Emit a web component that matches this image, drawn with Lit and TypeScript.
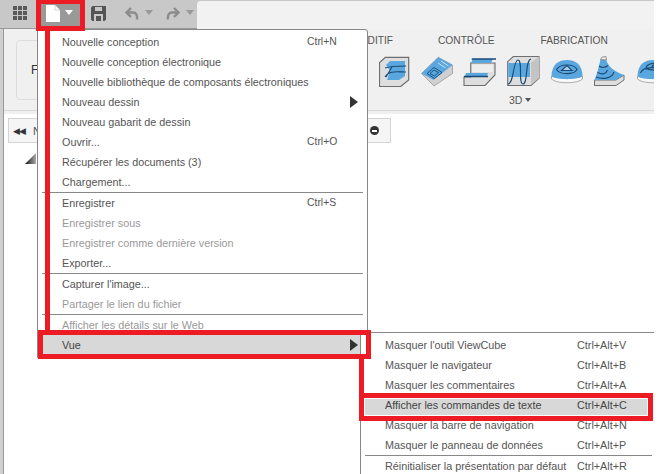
import { LitElement, html, css, svg } from "lit";
import { customElement } from "lit/decorators.js";

type Row = { t?: string; k?: string; dis?: boolean; arrow?: boolean; hot?: boolean; sep?: boolean };

const MAIN: Row[] = [
  { t: "Nouvelle conception", k: "Ctrl+N" },
  { t: "Nouvelle conception électronique" },
  { t: "Nouvelle bibliothèque de composants électroniques" },
  { t: "Nouveau dessin", arrow: true },
  { t: "Nouveau gabarit de dessin" },
  { t: "Ouvrir...", k: "Ctrl+O" },
  { t: "Récupérer les documents (3)" },
  { t: "Chargement..." },
  { sep: true },
  { t: "Enregistrer", k: "Ctrl+S" },
  { t: "Enregistrer sous", dis: true },
  { t: "Enregistrer comme dernière version", dis: true },
  { t: "Exporter..." },
  { sep: true },
  { t: "Capturer l'image..." },
  { t: "Partager le lien du fichier", dis: true },
  { sep: true },
  { t: "Afficher les détails sur le Web", dis: true },
  { t: "Vue", arrow: true, hot: true },
];
const SUB: Row[] = [
  { t: "Masquer l'outil ViewCube", k: "Ctrl+Alt+V" },
  { t: "Masquer le navigateur", k: "Ctrl+Alt+B" },
  { t: "Masquer les commentaires", k: "Ctrl+Alt+A" },
  { t: "Afficher les commandes de texte", k: "Ctrl+Alt+C", hot: true },
  { t: "Masquer la barre de navigation", k: "Ctrl+Alt+N" },
  { t: "Masquer le panneau de données", k: "Ctrl+Alt+P" },
  { sep: true },
  { t: "Réinitialiser la présentation par défaut", k: "Ctrl+Alt+R" },
];

const B = "#5aa7e0", D = "#1a4a73", G = "#dedede", O = "#6e6e6e";
/* Each icon sits in a slot; slot width sets the rhythm of the row. */
const ICONS = [
  svg`<svg class="ic" width="42" height="31" viewBox="0 0 42 31"><path d="M.5 6.700 6.300 1.300H29.700V24L21.700 30.500H.5Z" fill="${G}" stroke="${O}" stroke-width="1.200"/><path d="M7 9 11 5H26V20L20 24H8L11 15Z" fill="${B}"/><path d="M6 12C12 10 20 10 27 10M6 21C10 14 18 16 27 16M7 21 13 11" stroke="${D}" stroke-width="1.100" fill="none"/></svg>`,
  svg`<svg class="ic" width="42" height="31" viewBox="0 0 42 31"><path d="M.5 17.500 17.300 1.300 31.500 9V17.500L13 30Z" fill="#d0d0d0" stroke="#999" stroke-width=".8"/><path d="M.5 17.500 17.300 1.300 31.500 9 12.500 24Z" fill="${B}"/><path d="M6 17.500 13 11.500 21 16.500 13.500 22.500ZM9 17.500 13 14 17.500 16.500 13.500 20Z" stroke="${D}" fill="none" stroke-width=".9"/><path d="M17 7 24.500 12M20 5 27.500 10" stroke="#cfe5f6" stroke-width="1"/></svg>`,
  svg`<svg class="ic" width="44" height="31" viewBox="0 0 44 31"><path d="M7.700 7H32V19L22 29.500H1V21H7.700Z" fill="${G}" stroke="${O}" stroke-width="1.100"/><path d="M9.700 3H30L28 7H8Z" fill="${B}"/><path d="M3 17H25L24 20H2Z" fill="${B}"/><path d="M8.700 3H33M1 20.500H25" stroke="${D}" stroke-width="1.300"/><path d="M9 8.500H30V16H9Z" fill="#eee"/></svg>`,
  svg`<svg class="ic" width="44" height="31" viewBox="0 0 44 31"><path d="M.7 5.700 6.300 .5H32V22.300L24 29.500H.7Z" fill="${G}" stroke="${O}" stroke-width="1.100"/><path d="M1.300 7H23V21H1.300Z" fill="${B}"/><path d="M24 6.500 32 .5V22L24 29Z" fill="#c4c4c4"/><path d="M1 28C7 28 6 4 11 4S11 28 16 28 18 4 24 3" fill="none" stroke="${D}" stroke-width="1.100"/></svg>`,
  svg`<svg class="ic" width="43" height="31" viewBox="0 0 43 31"><path d="M.5 20V23C5 28 27 28 31.500 23V20Z" fill="#f8f8f8" stroke="#999" stroke-width=".8"/><path d="M.5 20.500C.5 8 8 4 16 4S31.500 8 31.500 20.500C26 24 6 24 .5 20.500Z" fill="${B}"/><path d="M5.500 13.500C9 7.500 23 7.500 26 13.500 23 19 9 19 5.500 13.500Z" fill="none" stroke="${D}" stroke-width="1.100"/><path d="M10.500 14.500 16 9.500 21 14.500Z" fill="#a9d2f0" stroke="${D}" stroke-width="1.100"/></svg>`,
  svg`<svg class="ic" width="43" height="31" viewBox="0 0 43 31"><path d="M.5 24H22L30 19V24L22 29.500H.5Z" fill="${G}" stroke="${O}"/><path d="M.5 24C3 18 5 10 6.500 3.500H12C14 10 19 15 30 19L22 24Z" fill="${B}"/><path d="M6.500 3.500 8 1 12 .5 12.500 4Z" fill="#eaeaea" stroke="#777" stroke-width=".7"/><path d="M3.500 16.500C9 19 12 18 13.500 14M2 21C10 24 18 22 20 16M5 10C8 12 11 12 14 9.500" fill="none" stroke="${D}" stroke-width="1.100"/></svg>`,
  svg`<svg class="ic" width="32" height="31" viewBox="0 0 32 31"><path d="M.5 20V23C5 28 27 28 31.500 23V20Z" fill="#f8f8f8" stroke="#999" stroke-width=".8"/><path d="M.5 20.500C.5 8 8 4 16 4S31.500 8 31.500 20.500C26 24 6 24 .5 20.500Z" fill="${B}"/><path d="M3.500 17C6 10 24 10 27 16M9 12C10 6 24 6 27 11 24 15 13 15 9 12ZM15 10.500C16 8 23 8 24 10.500 22 12.500 17 12.500 15 10.500Z" fill="none" stroke="${D}" stroke-width="1.100"/></svg>`,
];

@customElement("app-root")
export class AppRoot extends LitElement {
  static styles = css`
    :host {
      display: block;
      width: 660px;
      height: 474px;
      position: relative;
      overflow: hidden;
      background: #fff;
      font-family: "Liberation Sans", Arial, sans-serif;
      font-size: 11px;
      color: #555;
    }
    .app { width: 654px; height: 474px; display: flex; flex-direction: column; overflow: hidden; background: #fff; }
    .top { height: 29px; flex: none; box-sizing: border-box; background: #c8c8c8; border-bottom: 1px solid #999; display: flex; align-items: flex-start; position: relative; }
    .grid { margin: 6px 0 0 13px; width: 15px; height: 15px; display: grid; grid-template-columns: repeat(3, 4px); grid-auto-rows: 4px; gap: 1px; }
    .grid i { background: #5a5a5a; }
    .file { margin: 4px 0 0 13px; width: 39px; height: 22px; background: #999; display: flex; gap: 5px; padding: 1px 0 0 5px; box-sizing: border-box; }
    .save { margin: 6px 0 0 11px; }
    .undo { margin: 7px 0 0 19px; }
    .redo { margin: 7px 0 0 13px; }
    .car { width: 0; height: 0; border-left: 4px solid transparent; border-right: 4px solid transparent; border-top: 5px solid #999; margin: 10px 0 0 6px; }
    .file .car { border-top-color: #fff; margin: 5px 0 0; }
    .tab { position: absolute; left: 197px; right: 0; top: 1px; bottom: -1px; background: #f2f2f2; border-radius: 4px 0 0 0; }
    .body { flex: 1; display: flex; min-height: 0; }
    .strip { width: 3px; background: #cfcfcf; border-right: 1px solid #999; flex: none; }
    .main { flex: 1; display: flex; flex-direction: column; min-width: 0; }
    .ribbon { height: 81px; flex: none; background: #f0f0f0; border-bottom: 1px solid #d8d8d8; display: flex; }
    .foot { height: 3px; flex: none; background: #f0f0f0; }
    .card { margin: 11px 0 0 12px; width: 80px; height: 60px; border: 1px solid #dcdcdc; border-radius: 4px; box-sizing: border-box; display: flex; align-items: center; padding-left: 14px; color: #333; font-size: 12px; }
    .groups { margin-left: 264px; flex: 1; display: flex; flex-direction: column; min-width: 0; }
    .labels { display: flex; margin-top: 5px; height: 14px; line-height: 14px; font-size: 10.2px; color: #555; white-space: nowrap; }
    .labels .add { width: 33px; display: flex; justify-content: flex-end; flex: none; }
    .labels .ctl { margin-left: 45px; flex: none; }
    .labels .fab { margin-left: 46px; flex: none; }
    .icons { display: flex; margin: 8px 0 0 19px; height: 31px; }
    .ic { flex: none; display: block; }
    .sub3d { margin: 6px 0 0 149px; display: flex; align-items: center; gap: 3px; font-size: 10.5px; line-height: 14px; }
    .sub3d i { width: 0; height: 0; border-left: 3px solid transparent; border-right: 3px solid transparent; border-top: 4px solid #555; }
    .canvas { flex: 1; padding: 4px 0 0 4px; }
    .panel { width: 383px; height: 25px; box-sizing: border-box; border: 1px solid #d4d4d4; background: #f5f5f5; display: flex; align-items: center; padding: 0 11px 0 4px; }
    .panel .rw { letter-spacing: -1px; color: #333; font-size: 9px; width: 20px; }
    .panel .nm { color: #555; flex: 1; }
    .panel .minus { width: 9px; height: 9px; border-radius: 50%; background: #333; display: flex; align-items: center; justify-content: center; }
    .panel .minus b { width: 5px; height: 2px; background: #fff; display: block; }
    .tri { margin: 9px 0 0 17px; display: block; }

    .menu { position: absolute; background: #fff; box-sizing: border-box; }
    .m1 { left: 37px; top: 29px; width: 331px; height: 329px; border: 1px solid #888; border-radius: 0 3px 0 0; padding-top: 2px; }
    .m2 { left: 360px; top: 332px; width: 294px; height: 142px; border-top: 1px solid #888; border-left: 1px solid #888; padding-top: 2px; overflow: hidden; }
    .row { height: 20px; line-height: 20px; display: flex; align-items: center; position: relative; white-space: nowrap; font-size: 10.8px; }
    .m1 .row { padding-left: 24px; margin-right: 6px; }
    .m1 .k { font-size: 10.4px; }
    .m2 .row { padding-left: 24px; }
    .row .t { flex: none; }
    .m1 .t { width: 245px; }
    .m2 .t { width: 192px; }
    .row.dis { color: #999; }
    .row.hot { background: #d8d8d8; color: #444; }
    .m2 .row.hot { margin: 0 7px 0 4px; padding-left: 20px; background: linear-gradient(#d8d8d8, #d8d8d8) no-repeat 0 4px / 100% 16px; }
    .sep { height: 1px; background: #888; margin: 0 4px; }
    .m2 .sep { margin: 0 2px 0 4px; }
    .arr { position: absolute; right: 3px; top: 4px; width: 0; height: 0; border-left: 8px solid #333; border-top: 6.5px solid transparent; border-bottom: 6.5px solid transparent; }

    .red { position: absolute; box-sizing: border-box; border: 5px solid #ed1c24; }
    .bar { position: absolute; background: #ed1c24; width: 5px; }
    .r-file { left: 36px; top: -1px; width: 49px; height: 32px; }
    .b-left { left: 45px; top: 31px; height: 299px; }
    .r-vue { left: 38px; top: 330px; width: 333px; height: 29px; }
    .b-conn { left: 359px; top: 359px; height: 34px; }
    .r-aff { left: 359px; top: 393px; width: 294px; height: 28px; }
  `;

  private rows(list: Row[]) {
    return list.map((r) =>
      r.sep
        ? html`<div class="sep"></div>`
        : html`<div class="row ${r.dis ? "dis" : ""} ${r.hot ? "hot" : ""}">
            <span class="t">${r.t}</span><span class="k">${r.k ?? ""}</span>
            ${r.arrow ? html`<i class="arr"></i>` : ""}
          </div>`
    );
  }

  render() {
    return html`
      <div class="app">
        <div class="top">
          <div class="grid">${Array.from({ length: 9 }, () => html`<i></i>`)}</div>
          <div class="file">
            <svg width="14" height="17" viewBox="0 0 14 17"><path d="M0 0H9L14 5V17H0Z" fill="#fff"/><path d="M9 0V5H14" fill="none" stroke="#bbb" stroke-width=".6"/></svg>
            <i class="car"></i>
          </div>
          <svg class="save" width="15" height="15" viewBox="0 0 15 15"><path d="M1.500 0H15V13.500L13.500 15H1.500L0 13.500V1.500Z" fill="#555"/><rect x="4" y="1" width="7" height="4" fill="#c8c8c8"/><rect x="3" y="8" width="9" height="7" fill="#c8c8c8"/><rect x="5" y="10" width="5" height="5" fill="#555"/></svg>
          <svg class="undo" width="14" height="13" viewBox="0 0 14 13"><path d="M6 1 1.500 5.500 6 10M1.500 5.500H8C11 5.500 12.500 8 12 12.500" fill="none" stroke="#8c8c8c" stroke-width="2.400"/></svg>
          <i class="car"></i>
          <svg class="redo" width="14" height="13" viewBox="0 0 14 13"><path d="M8 1 12.500 5.500 8 10M12.500 5.500H6C3 5.500 1.500 8 2 12.500" fill="none" stroke="#8c8c8c" stroke-width="2.400"/></svg>
          <i class="car"></i>
          <div class="tab"></div>
        </div>
        <div class="body">
          <div class="strip"></div>
          <div class="main">
            <div class="ribbon">
              <div class="card">FA</div>
              <div class="groups">
                <div class="labels">
                  <span class="add"><span>ADDITIF</span></span>
                  <span class="ctl">CONTRÔLE</span>
                  <span class="fab">FABRICATION</span>
                </div>
                <div class="icons">${ICONS}</div>
                <div class="sub3d">3D <i></i></div>
              </div>
            </div>
            <div class="foot"></div>
            <div class="canvas">
              <div class="panel">
                <span class="rw">◀◀</span><span class="nm">N</span>
                <span class="minus"><b></b></span>
              </div>
              <svg class="tri" width="12" height="12" viewBox="0 0 12 12"><defs><linearGradient id="g" x1="0" x2="1"><stop offset="0" stop-color="#111"/><stop offset="1" stop-color="#aaa"/></linearGradient></defs><path d="M0 12 11 1V12Z" fill="url(#g)"/></svg>
            </div>
          </div>
        </div>
      </div>
      <div class="menu m1">${this.rows(MAIN)}</div>
      <div class="menu m2">${this.rows(SUB)}</div>
      <div class="red r-file"></div>
      <div class="bar b-left"></div>
      <div class="red r-vue"></div>
      <div class="bar b-conn"></div>
      <div class="red r-aff"></div>
    `;
  }
}
